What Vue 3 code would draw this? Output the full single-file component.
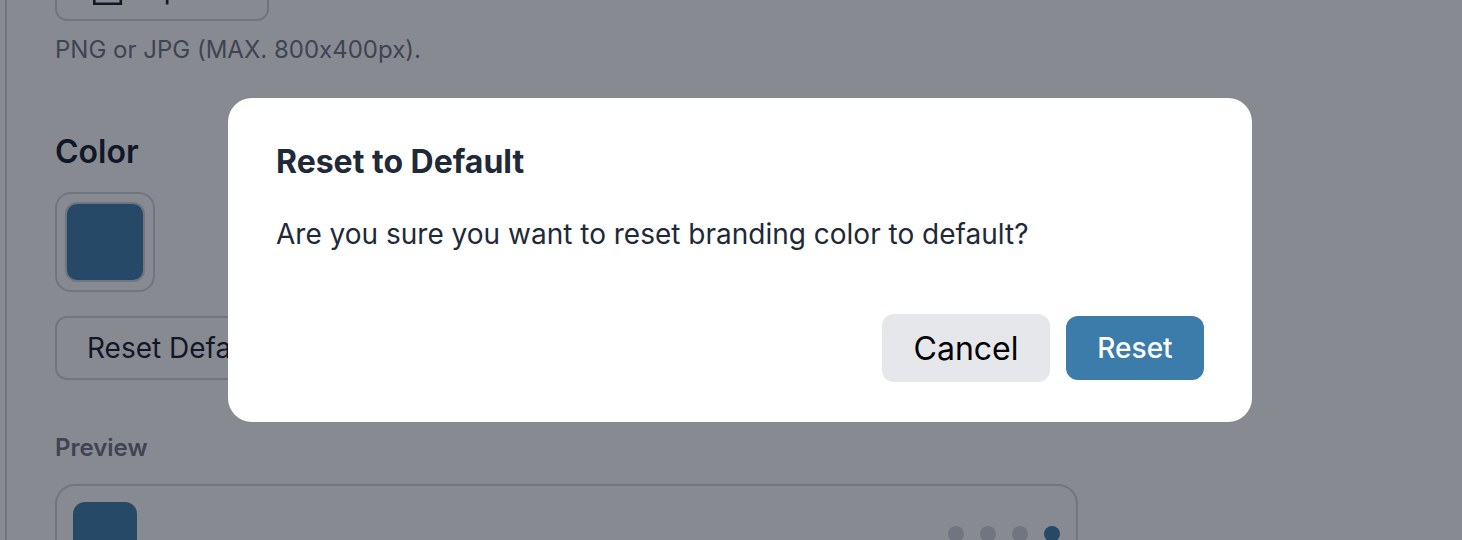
<template>
  <div class="page">
    <div class="content">
      <button class="outline-btn upload-btn">
        <svg width="32" height="32" viewBox="0 0 32 32" fill="none" stroke="currentColor" stroke-width="2.6"><path d="M1.3 20v10.7h26.5V20M14.5 22V4M8 10l6.5-7 6.5 7" /></svg>
        Upload
      </button>
      <p class="hint">PNG or JPG (MAX. 800x400px).</p>

      <h2 class="section-title">Color</h2>
      <div class="swatch-frame">
        <div class="swatch"></div>
      </div>
      <button class="outline-btn reset-default">Reset Default</button>

      <h3 class="preview-label">Preview</h3>
      <div class="preview-card">
        <div class="preview-logo"></div>
        <div class="dots">
          <span class="dot"></span>
          <span class="dot"></span>
          <span class="dot"></span>
          <span class="dot active"></span>
        </div>
      </div>
    </div>

    <div class="overlay"></div>
    <div class="modal">
      <h2 class="modal-title">Reset to Default</h2>
      <p class="modal-text">Are you sure you want to reset branding color to default?</p>
      <div class="modal-actions">
        <button class="btn-cancel">Cancel</button>
        <button class="btn-reset">Reset</button>
      </div>
    </div>
  </div>
</template>

<script setup>
</script>

<style>
html, body {
  margin: 0;
  overflow: hidden;
}
</style>

<style scoped>
.page {
  position: relative;
  height: 540px;
  overflow: hidden;
  background: #fff;
  font-family: Inter, "Liberation Sans", sans-serif;
  font-feature-settings: "calt" 0;
  color: #111827;
}

.content {
  width: 1073px;
  height: 600px;
  margin-top: -43px;
  margin-left: 5px;
  padding-left: 48px;
  border-left: 2px solid #d1d5db;
  box-sizing: border-box;
}

.outline-btn {
  display: flex;
  align-items: center;
  box-sizing: border-box;
  background: #fff;
  border: 2px solid #d1d5db;
  border-radius: 12px;
  font-family: inherit;
  font-feature-settings: inherit;
  font-size: 28px;
  color: #111827;
  white-space: nowrap;
}

.upload-btn {
  width: 214px;
  height: 64px;
  padding: 0 0 0 36px;
  gap: 18px;
}

.upload-btn svg {
  flex-shrink: 0;
}

.hint {
  margin: 14px 0 0;
  font-size: 24px;
  line-height: 30px;
  color: #6b7280;
}

.section-title {
  margin: 67px 0 0;
  font-size: 32px;
  line-height: 40px;
  font-weight: 600;
}

.swatch-frame {
  box-sizing: border-box;
  width: 100px;
  height: 100px;
  margin-top: 20px;
  padding: 8px;
  border: 2px solid #d1d5db;
  border-radius: 16px;
}

.swatch {
  width: 100%;
  height: 100%;
  box-sizing: border-box;
  background: #3b7cab;
  border: 2px solid #d1d5db;
  border-radius: 12px;
}

.reset-default {
  width: 260px;
  height: 64px;
  margin-top: 24px;
  padding: 0 30px;
}

.preview-label {
  margin: 52px 0 0;
  font-size: 24px;
  line-height: 32px;
  font-weight: 600;
  color: #6b7280;
}

.preview-card {
  display: flex;
  align-items: flex-start;
  justify-content: space-between;
  box-sizing: border-box;
  width: 1023px;
  height: 120px;
  margin-top: 20px;
  padding: 16px;
  border: 2px solid #d1d5db;
  border-radius: 20px;
}

.preview-logo {
  width: 64px;
  height: 64px;
  background: #3b7cab;
  border-radius: 12px;
}

.dots {
  display: flex;
  gap: 16px;
  margin-top: 24px;
}

.dot {
  width: 16px;
  height: 16px;
  border-radius: 50%;
  background: #d1d5db;
}

.dot.active {
  background: #3b7cab;
}

.overlay {
  position: absolute;
  inset: 0;
  background: rgba(17, 22, 37, 0.5);
}

.modal {
  position: absolute;
  left: 228px;
  top: 98px;
  width: 1024px;
  height: 324px;
  box-sizing: border-box;
  padding: 48px;
  background: #fff;
  border-radius: 24px;
  color: #1f2937;
}

.modal-title {
  margin: 0;
  font-size: 32px;
  line-height: 32px;
  font-weight: 700;
}

.modal-text {
  margin: 38px 0 0;
  font-size: 28px;
  line-height: 36px;
}

.modal-actions {
  position: absolute;
  right: 48px;
  top: 216px;
  display: flex;
  align-items: center;
  gap: 16px;
}

.btn-cancel {
  width: 168px;
  height: 68px;
  padding: 0;
  border: none;
  border-radius: 12px;
  background: #e5e7eb;
  color: #000;
  font-family: inherit;
  font-size: 32px;
}

.btn-reset {
  width: 138px;
  height: 64px;
  padding: 0;
  border: none;
  border-radius: 12px;
  background: #3b7cab;
  color: #fff;
  font-family: inherit;
  font-size: 28px;
  font-weight: 500;
}
</style>
